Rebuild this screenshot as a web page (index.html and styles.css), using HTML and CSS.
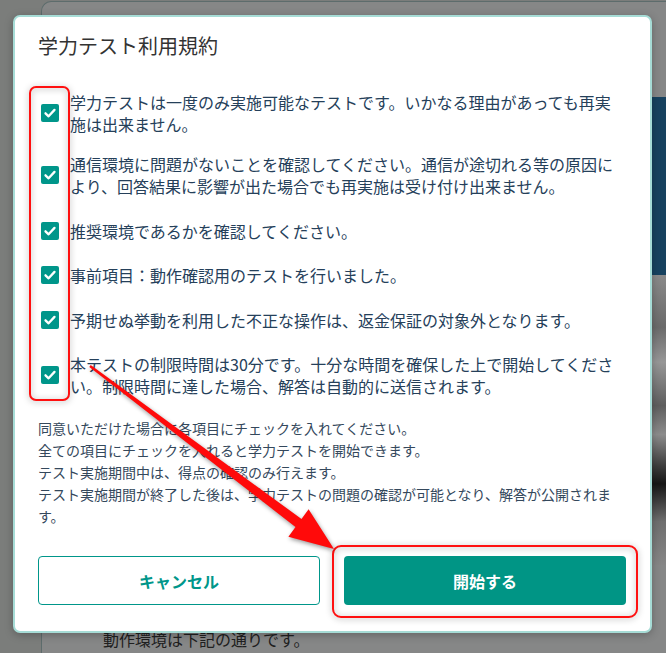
FILE: index.html
```html
<!DOCTYPE html>
<html lang="ja">
<head>
    <meta charset="UTF-8">
    <title>学力テスト利用規約</title>
    <link rel="stylesheet" href="styles.css">
</head>
<body>
    <!-- page behind the dimmed overlay -->
    <div class="page">
        <div class="sheet">
            <div class="sheet-banner"></div>
            <div class="sheet-photo"></div>
            <p class="sheet-text">動作環境は下記の通りです。</p>
        </div>
    </div>

    <div class="modal">
        <h2 class="modal-title">学力テスト利用規約</h2>

        <ul class="terms">
            <li class="term">
                <span class="check"><svg viewBox="0 0 18 18"><polyline points="4.5,9.3 7.6,12.3 13.5,5.9"/></svg></span>
                <span class="term-text">学力テストは一度のみ実施可能なテストです。いかなる理由があっても再実施は出来ません。</span>
            </li>
            <li class="term">
                <span class="check"><svg viewBox="0 0 18 18"><polyline points="4.5,9.3 7.6,12.3 13.5,5.9"/></svg></span>
                <span class="term-text">通信環境に問題がないことを確認してください。通信が途切れる等の原因により、回答結果に影響が出た場合でも再実施は受け付け出来ません。</span>
            </li>
            <li class="term">
                <span class="check"><svg viewBox="0 0 18 18"><polyline points="4.5,9.3 7.6,12.3 13.5,5.9"/></svg></span>
                <span class="term-text">推奨環境であるかを確認してください。</span>
            </li>
            <li class="term">
                <span class="check"><svg viewBox="0 0 18 18"><polyline points="4.5,9.3 7.6,12.3 13.5,5.9"/></svg></span>
                <span class="term-text">事前項目：動作確認用のテストを行いました。</span>
            </li>
            <li class="term">
                <span class="check"><svg viewBox="0 0 18 18"><polyline points="4.5,9.3 7.6,12.3 13.5,5.9"/></svg></span>
                <span class="term-text">予期せぬ挙動を利用した不正な操作は、返金保証の対象外となります。</span>
            </li>
            <li class="term">
                <span class="check"><svg viewBox="0 0 18 18"><polyline points="4.5,9.3 7.6,12.3 13.5,5.9"/></svg></span>
                <span class="term-text">本テストの制限時間は30分です。十分な時間を確保した上で開始してください。制限時間に達した場合、解答は自動的に送信されます。</span>
            </li>
        </ul>

        <p class="notes">
            同意いただけた場合に各項目にチェックを入れてください。<br>
            全ての項目にチェックを入れると学力テストを開始できます。<br>
            テスト実施期間中は、得点の確認のみ行えます。<br>
            テスト実施期間が終了した後は、学力テストの問題の確認が可能となり、解答が公開されます。
        </p>

        <div class="actions">
            <button class="btn btn-cancel">キャンセル</button>
            <button class="btn btn-start">開始する</button>
        </div>
    </div>

    <!-- red annotation marks -->
    <svg class="marks" viewBox="0 0 666 653">
        <rect x="30" y="87" width="39" height="313" rx="6"/>
        <rect x="333" y="546" width="304" height="71" rx="8"/>
        <polygon class="arrow" points="90.7,365 301.5,519 308.6,509.3 334,549 288.4,536.7 295.5,527 89.3,367"/>
    </svg>
</body>
</html>
```

FILE: styles.css
```css
body {
    margin: 0;
    width: 666px;
    height: 653px;
    overflow: hidden;
    background-color: #7b7d7b;
    font-family: "Noto Sans CJK JP", "Noto Sans", sans-serif;
}

/* dimmed page */
.page {
    padding: 1px 0 0 41px;
}

.sheet {
    height: 651px;
    overflow: hidden;
    background-color: #868787;
    border-top: 1px solid #5d6c6c;
    border-left: 1px solid #5d6c6c;
    border-radius: 10px 0 0 0;
}

.sheet-banner {
    margin-top: 95px;
    height: 178px;
    background-color: #17425f;
}

.sheet-photo {
    height: 290px;
    background: linear-gradient(#8a8a8a 0%, #6a6a6a 18%, #979797 30%, #5e5e5e 45%, #8c8c8c 55%, #3c3c3c 66%, #161616 72%, #6e6e6e 85%, #868686 100%);
}

.sheet-text {
    margin: 63px 0 0 61px;
    font-size: 16px;
    line-height: 22px;
    color: #202020;
}

/* dialog */
.modal {
    position: absolute;
    left: 13px;
    top: 15px;
    width: 588px;
    padding: 14px 24px 26px 23px;
    background-color: #fff;
    border: 2px solid #a6dcd6;
    border-radius: 7px;
    box-shadow: 0 2px 8px rgba(0, 0, 0, 0.25);
}

.modal-title {
    margin: 0;
    font-size: 20px;
    line-height: 30px;
    font-weight: normal;
    color: #333;
}

.terms {
    list-style: none;
    margin: 30px 0 0 0;
    padding: 0 0 0 3px;
    display: flex;
    flex-direction: column;
    gap: 22.5px;
}

.term {
    display: flex;
    align-items: center;
    gap: 11px;
}

.term:first-child {
    margin-bottom: -4.5px;
}

.check {
    flex: none;
    width: 18px;
    height: 18px;
    border-radius: 2px;
    background-color: #00968a;
}

.check svg {
    display: block;
    width: 18px;
    height: 18px;
    fill: none;
    stroke: #fff;
    stroke-width: 2.3;
    stroke-linecap: round;
    stroke-linejoin: round;
}

.term-text {
    font-size: 16px;
    line-height: 22px;
    color: #25405a;
}

.notes {
    margin: 20px 0 0 0;
    padding-right: 4px;
    font-size: 14px;
    line-height: 22px;
    color: #34485c;
}

.actions {
    display: grid;
    grid-template-columns: 1fr 1fr;
    gap: 24px;
    margin-top: 29px;
}

.btn {
    height: 49px;
    border-radius: 4px;
    font-family: inherit;
    font-size: 16px;
    font-weight: bold;
    cursor: pointer;
}

.btn-cancel {
    background-color: #fff;
    color: #00968a;
    border: 1px solid #00968a;
}

.btn-start {
    background-color: #009585;
    color: #fff;
    border: none;
}

/* annotations */
.marks {
    position: absolute;
    left: 0;
    top: 0;
    width: 666px;
    height: 653px;
    pointer-events: none;
}

.marks rect {
    fill: none;
    stroke: #ff1010;
    stroke-width: 2;
    filter: drop-shadow(0 1px 3px rgba(0, 0, 0, 0.35));
}

.marks .arrow {
    fill: #ff0a0a;
    filter: drop-shadow(1px 2px 2px rgba(0, 0, 0, 0.4));
}
```
